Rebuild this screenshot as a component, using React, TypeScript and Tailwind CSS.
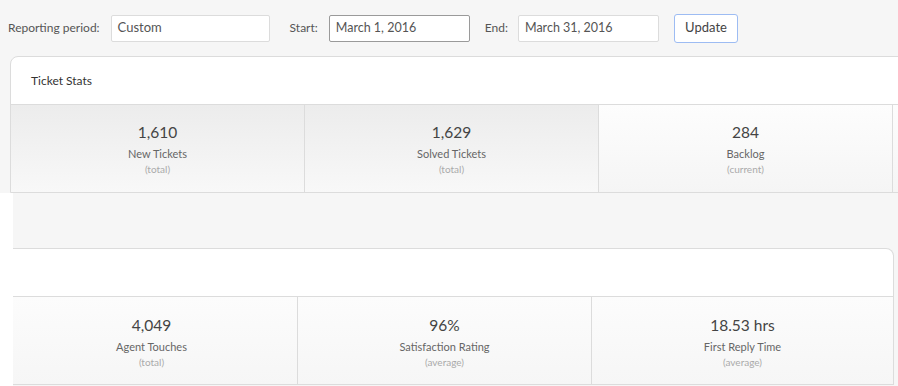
import React from 'react';

type Stat = { value: string; label: string; note: string; hot?: boolean };

const ticketStats: Stat[] = [
  { value: '1,610', label: 'New Tickets', note: '(total)', hot: true },
  { value: '1,629', label: 'Solved Tickets', note: '(total)', hot: true },
  { value: '284', label: 'Backlog', note: '(current)' },
  { value: '', label: '', note: '' },
];

const agentStats: Stat[] = [
  { value: '4,049', label: 'Agent Touches', note: '(total)' },
  { value: '96%', label: 'Satisfaction Rating', note: '(average)' },
  { value: '18.53 hrs', label: 'First Reply Time', note: '(average)' },
];

const StatBody: React.FC<{ s: Stat }> = ({ s }) => (
  <>
    <div className="text-[15.5px] leading-[20px] text-[#444]">{s.value}</div>
    <div className="mt-[5px] text-[11px] leading-[14px] text-[#666]">{s.label}</div>
    <div className="mt-[1px] text-[10px] leading-[14px] text-[#aaa]">{s.note}</div>
  </>
);

const App: React.FC = () => {
  return (
    <div
      className="w-[898px] h-[386px] overflow-hidden bg-white"
      style={{ fontFamily: 'Lato, "Open Sans", sans-serif' }}
    >
      {/* Top area */}
      <div className="bg-[#f6f6f6] h-[193px] overflow-hidden">
        {/* Filter bar */}
        <div className="h-[56px] flex items-center pl-[8px] text-[12px] text-[#555]">
          <span>Reporting period:</span>
          <div className="ml-[11px] w-[159px] h-[27px] bg-white border border-[#dcdcdc] rounded-[2px] flex items-center pl-[6px] text-[13px] text-[#555]">
            Custom
          </div>
          <span className="ml-[20px]">Start:</span>
          <div className="ml-[11px] w-[141px] h-[27px] bg-white border border-[#9a9a9a] rounded-[2px] flex items-center pl-[6px] text-[12.5px] text-[#555]">
            March 1, 2016
          </div>
          <span className="ml-[15px]">End:</span>
          <div className="ml-[10px] w-[141px] h-[27px] bg-white border border-[#dcdcdc] rounded-[2px] flex items-center pl-[6px] text-[12.5px] text-[#555]">
            March 31, 2016
          </div>
          <button className="ml-[15px] w-[64px] h-[29px] bg-white border border-[#9dbcf3] rounded-[3px] text-[13px] text-[#444]">
            Update
          </button>
        </div>

        {/* Ticket Stats panel */}
        <div className="ml-[10px] w-[1200px] h-[137px] bg-white border border-[#dcdcdc] rounded-tl-[8px] flex flex-col">
          <div className="h-[48px] flex items-center pl-[20px] text-[12px] text-[#333] border-b border-[#dcdcdc]">
            Ticket Stats
          </div>
          <div className="flex flex-1">
            {ticketStats.map((s, i) => (
              <div
                key={i}
                className={`w-[294px] flex flex-col items-center pt-[17px] border-r border-[#dcdcdc] bg-gradient-to-b ${
                  s.hot ? 'from-[#ececec] to-[#f8f8f8]' : 'from-[#fdfdfd] to-[#f5f5f5]'
                }`}
              >
                <StatBody s={s} />
              </div>
            ))}
          </div>
        </div>
      </div>

      {/* Lower area */}
      <div className="flex h-[193px]">
        <div className="w-[13px] bg-white" />
        <div className="flex-1 bg-[#f6f6f6] pt-[55px]">
          <div className="w-[881px] h-[137px] bg-white border-t border-r border-b border-[#dcdcdc] rounded-tr-[8px] flex flex-col">
            <div className="h-[48px] border-b border-[#dcdcdc]" />
            <div className="flex flex-1">
              {agentStats.map((s, i) => (
                <div
                  key={i}
                  className={`flex flex-col items-center pt-[18px] bg-gradient-to-b from-[#fcfcfc] to-[#f6f6f6] ${
                    i === 0 ? 'w-[285px] pr-[7px] border-r border-[#dcdcdc]' : i === 1 ? 'w-[294px] border-r border-[#dcdcdc]' : 'flex-1'
                  }`}
                >
                  <StatBody s={s} />
                </div>
              ))}
            </div>
          </div>
        </div>
      </div>
    </div>
  );
};

export default App;
